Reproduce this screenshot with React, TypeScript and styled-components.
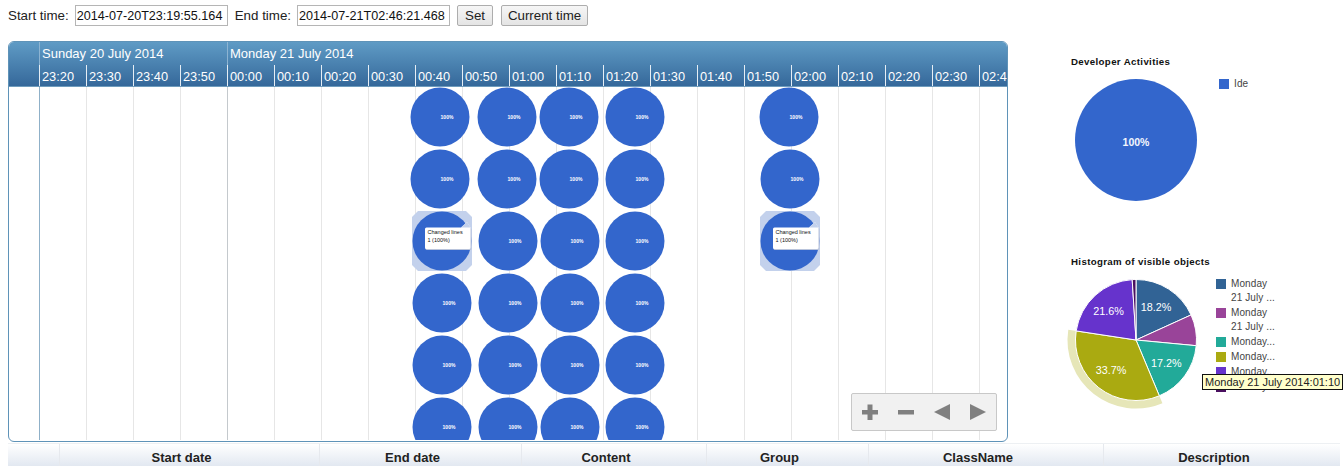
import React from "react";
import styled, { createGlobalStyle } from "styled-components";

const Global = createGlobalStyle`
  html, body { margin: 0; padding: 0; background: #fff; }
  body { font-family: "Liberation Sans", Arial, sans-serif; overflow: hidden; }
`;
const Page = styled.div`
  width: 1343px; height: 466px; overflow: hidden; display: flex; flex-direction: column;
`;
const Toolbar = styled.div`
  height: 41px; flex: none; box-sizing: border-box; padding: 5px 0 0 8px; display: flex; align-items: flex-start;
  font-size: 13.33px; color: #222;
`;
const FieldLabel = styled.label`
  line-height: 21px; margin-right: 6px;
`;
const TimeInput = styled.input`
  box-sizing: border-box; width: 153px; height: 21px; margin: 0 7px 0 0; padding: 0 1px;
  border: 1px solid #b5b5b5; font: 12.6px "Liberation Sans", Arial, sans-serif; color: #111;
`;
const SetButton = styled.button<{ $w: number }>`
  box-sizing: border-box; width: ${p => p.$w}px; height: 21px; margin: 0 8px 0 0; padding: 0;
  border: 1px solid #adadad; border-radius: 2px; background: linear-gradient(#f6f6f6, #e4e4e4);
  font: 13.33px "Liberation Sans", Arial, sans-serif; color: #222;
`;
const Main = styled.div`
  display: flex; flex: none; height: 402px; padding-left: 8px;
`;
const Timeline = styled.div`
  box-sizing: border-box; width: 1000px; height: 401px; border: 1px solid #5f93b8; border-radius: 6px;
  overflow: hidden; display: flex; flex-direction: column; position: relative; padding-bottom: 1px;
`;
const Header = styled.div`
  flex: none; box-sizing: border-box; height: 45px; background: linear-gradient(#5f9bc5, #35689a); color: #fff; font-size: 12.8px;
  border-bottom: 1px solid #6f9cbd; overflow: hidden;
`;
const MajorRow = styled.div`
  height: 23px; padding-left: 30px; display: flex;
`;
const Major = styled.div<{ $w?: number }>`
  box-sizing: border-box; flex: ${p => (p.$w ? `0 0 ${p.$w}px` : "1")}; padding: 3px 0 0 2px; line-height: 17px; font-size: 13px;
  border-left: 1px solid #8db4d2; white-space: nowrap;
`;
const MinorRow = styled.div`
  height: 21px; padding-left: 30px; display: flex;
`;
const Minor = styled.div`
  box-sizing: border-box; flex: 0 0 47px; padding: 2px 0 0 2px; line-height: 19px; border-left: 1px solid #e6eef5;
  white-space: nowrap; overflow: hidden;
`;
const Body = styled.div`
  flex: 1; position: relative; display: flex; padding-left: 30px; overflow: hidden;
`;
const GridCell = styled.div<{ $major?: boolean; $first?: boolean }>`
  box-sizing: border-box; flex: 0 0 47px; border-left: 1px solid ${p => (p.$first ? "#8fb0c8" : p.$major ? "#c4c9cd" : "#e6e6e6")};
`;
const NodeSvg = styled.svg<{ $cx: number; $cy: number }>`
  position: absolute; left: ${p => p.$cx - 9 - 35}px; top: ${p => p.$cy - 87 - 35}px; width: 70px; height: 70px;
`;
const ZoomBar = styled.div`
  position: absolute; left: 842px; top: 306px; box-sizing: border-box; width: 146px; height: 38px;
  display: flex; align-items: center; background: #f1f1f1; border: 1px solid #c8c8c8; border-radius: 2px;
`;
const ZoomIcon = styled.svg`
  flex: 0 0 36px; width: 36px; height: 20px; fill: #808080;
`;
const Side = styled.div`
  margin-left: 61px; width: 274px; flex: none; display: flex; flex-direction: column; padding-top: 13px;
`;
const Chart = styled.section`
  flex: none; height: 200px; position: relative;
`;
const ChartTitle = styled.h3`
  margin: 2px 0 5px 2px; height: 12px; font-size: 9.7px; line-height: 12px; font-weight: bold; color: #111; letter-spacing: 0.35px;
`;
const ChartRow = styled.div`
  display: flex; align-items: flex-start;
`;
const PieSvg = styled.svg`
  flex: none; width: 134px; height: 134px; overflow: visible;
`;
const Legend = styled.ul<{ $ml: number }>`
  list-style: none; margin: 4px 0 0 ${p => p.$ml}px; padding: 0; display: flex; flex-direction: column; gap: 1px;
`;
const LegendItem = styled.li`
  display: flex; gap: 5px; font-size: 10px; line-height: 14px; color: #444; letter-spacing: 0.1px;
`;
const Swatch = styled.span<{ $c: string }>`
  flex: none; width: 10px; height: 10px; margin-top: 2px; background: ${p => p.$c};
`;
const HoverTip = styled.div`
  position: absolute; left: 133px; top: 120px; box-sizing: border-box; height: 16px; padding: 0 2px;
  background: #ffffcc; border: 1px solid #111; font-size: 11px; line-height: 14px; color: #222; white-space: nowrap;
`;
const TableHead = styled.div`
  box-sizing: border-box; margin: 0 3px 0 8px; height: 23px; flex: none; display: grid; grid-template-columns: 51px 260px 202px 185px 162px 235px 237px;
  background: linear-gradient(#ffffff, #e2e8f1); border-top: 1px solid #edf0f3;
`;
const Col = styled.div`
  border-left: 1px solid #e6e9ee; padding-right: 16px; text-align: center; font-size: 13px; font-weight: bold; line-height: 27px; color: #222;
  &:first-child { border-left: 0; }
`;

const ticks = ["23:20","23:30","23:40","23:50","00:00","00:10","00:20","00:30","00:40","00:50","01:00","01:10","01:20","01:30","01:40","01:50","02:00","02:10","02:20","02:30","02:40"];

const nodes: [number, number, boolean?][] = [
  [440,117],[507,117],[569,117],[634.5,117],[789,117],
  [440,179],[507,179],[569,179],[634.5,179],[790,179],
  [442,241,true],[508,241],[570,241],[634.5,241],[790,241,true],
  [442,303],[508,303],[570,303],[635,303],
  [442,365],[508,365],[570,365],[635,365],
  [442,427],[508,427],[570,427],[635,427],
];

function PieNode({ cx, cy, hover }: { cx: number; cy: number; hover?: boolean }) {
  return (
    <NodeSvg $cx={cx} $cy={cy} viewBox="0 0 70 70">
      {hover && <polygon points="11,5 59,5 65,11 65,59 59,65 11,65 5,59 5,11" fill="#c3d1ec" />}
      <circle cx="35" cy="35" r="29.5" fill="#3366cc" />
      {hover ? (
        <>
          <rect x="18.5" y="22" width="46" height="22" rx="1.5" fill="#b9c4dc" />
          <path d="M18 23 a1.500 1.500 0 0 1 1.500 -1.500 H54 L60 16 L63.500 21.500 V41.500 a1.500 1.500 0 0 1 -1.500 1.500 H19.500 a1.500 1.500 0 0 1 -1.500 -1.500 Z" fill="#fff" />
          <polygon points="54,21.500 60,16 63.500,21.500" fill="#c3d1ec" />
          <text x="20.500" y="28" fontSize="5.500" fill="#111" fontFamily="Liberation Sans, Arial, sans-serif">Changed lines</text>
          <text x="20.500" y="36" fontSize="5.500" fill="#111" fontFamily="Liberation Sans, Arial, sans-serif">1 (100%)</text>
        </>
      ) : (
        <text x="42" y="36.800" textAnchor="middle" fontSize="5" fontWeight="bold" fill="#fff" fontFamily="Liberation Sans, Arial, sans-serif">100%</text>
      )}
    </NodeSvg>
  );
}

const slices = [
  { c: "#316395", v: 18.2, label: "18.2%" },
  { c: "#994499", v: 8.3 },
  { c: "#22aa99", v: 17.2, label: "17.2%" },
  { c: "#aaaa11", v: 33.7, label: "33.7%" },
  { c: "#6633cc", v: 21.6, label: "21.6%" },
  { c: "#4a1060", v: 1.0 },
];

const C = 67;
const pt = (pct: number, r: number) => {
  const a = (pct / 100) * 2 * Math.PI;
  return [C + r * Math.sin(a), C - r * Math.cos(a)] as const;
};
const arcPath = (from: number, to: number, r: number) => {
  const [x1, y1] = pt(from, r);
  const [x2, y2] = pt(to, r);
  return `M${C} ${C} L${x1} ${y1} A${r} ${r} 0 ${to - from > 50 ? 1 : 0} 1 ${x2} ${y2} Z`;
};
const ring = (from: number, to: number, r1: number, r2: number) => {
  const [a, b] = pt(from, r2);
  const [c, d] = pt(to, r2);
  const [e, f] = pt(to, r1);
  const [g, h] = pt(from, r1);
  return `M${a} ${b} A${r2} ${r2} 0 ${to - from > 50 ? 1 : 0} 1 ${c} ${d} L${e} ${f} A${r1} ${r1} 0 ${to - from > 50 ? 1 : 0} 0 ${g} ${h} Z`;
};

function Histogram() {
  let cum = 0;
  return (
    <PieSvg viewBox="0 0 134 134">
      <path d={ring(43.7, 77.4, 60, 68.5)} fill="#e6e6b8" />
      {slices.map(s => {
        const from = cum;
        cum += s.v;
        const mid = from + s.v / 2;
        const [lx, ly] = pt(mid, 39);
        return (
          <g key={s.c}>
            <path d={arcPath(from, cum, 60.5)} fill={s.c} stroke="#fff" strokeWidth="1" />
            {s.label && (
              <text x={lx - 1} y={ly + 3.5} textAnchor="middle" fontSize="10.8" fill="#fff" fontFamily="Liberation Sans, Arial, sans-serif">{s.label}</text>
            )}
          </g>
        );
      })}
    </PieSvg>
  );
}

export default function App() {
  return (
    <Page>
      <Global />
      <Toolbar>
        <FieldLabel>Start time:</FieldLabel>
        <TimeInput readOnly value="2014-07-20T23:19:55.164" />
        <FieldLabel>End time:</FieldLabel>
        <TimeInput readOnly value="2014-07-21T02:46:21.468" />
        <SetButton $w={36}>Set</SetButton>
        <SetButton $w={87}>Current time</SetButton>
      </Toolbar>
      <Main>
        <Timeline>
          <Header>
            <MajorRow>
              <Major $w={188}>Sunday 20 July 2014</Major>
              <Major>Monday 21 July 2014</Major>
            </MajorRow>
            <MinorRow>
              {ticks.map(t => <Minor key={t}>{t}</Minor>)}
            </MinorRow>
          </Header>
          <Body>
            {ticks.map((t, i) => <GridCell key={t} $first={i === 0} $major={i === 4} />)}
            {nodes.map(([x, y, h]) => <PieNode key={`${x}-${y}`} cx={x} cy={y} hover={h} />)}
            <ZoomBar>
              <ZoomIcon viewBox="0 0 36 20"><path d="M15.500 2.500h5v5.500h5.500v4.500h-5.500v5.500h-5v-5.500H10V8h5.500z" /></ZoomIcon>
              <ZoomIcon viewBox="0 0 36 20"><rect x="10" y="8" width="16" height="4.500" /></ZoomIcon>
              <ZoomIcon viewBox="0 0 36 20"><polygon points="10,10 26,2 26,18" /></ZoomIcon>
              <ZoomIcon viewBox="0 0 36 20"><polygon points="10,2 26,10 10,18" /></ZoomIcon>
            </ZoomBar>
          </Body>
        </Timeline>
        <Side>
          <Chart>
            <ChartTitle>Developer Activities</ChartTitle>
            <ChartRow>
              <PieSvg viewBox="0 0 134 134">
                <circle cx="67" cy="67" r="61" fill="#3366cc" />
                <text x="67" y="73" textAnchor="middle" fontSize="10.500" fontWeight="bold" fill="#f4f6fc" fontFamily="Liberation Sans, Arial, sans-serif">100%</text>
              </PieSvg>
              <Legend $ml={16}>
                <LegendItem><Swatch $c="#3366cc" />Ide</LegendItem>
              </Legend>
            </ChartRow>
          </Chart>
          <Chart>
            <ChartTitle>Histogram of visible objects</ChartTitle>
            <ChartRow>
              <Histogram />
              <Legend $ml={13}>
                <LegendItem><Swatch $c="#316395" /><span>Monday<br />21 July ...</span></LegendItem>
                <LegendItem><Swatch $c="#994499" /><span>Monday<br />21 July ...</span></LegendItem>
                <LegendItem><Swatch $c="#22aa99" />Monday...</LegendItem>
                <LegendItem><Swatch $c="#aaaa11" />Monday...</LegendItem>
                <LegendItem><Swatch $c="#6633cc" />Monday...</LegendItem>
                <LegendItem><Swatch $c="#4a1060" />Monday...</LegendItem>
              </Legend>
            </ChartRow>
            <HoverTip>Monday 21 July 2014:01:10</HoverTip>
          </Chart>
        </Side>
      </Main>
      <TableHead>
        <Col />
        <Col>Start date</Col>
        <Col>End date</Col>
        <Col>Content</Col>
        <Col>Group</Col>
        <Col>ClassName</Col>
        <Col>Description</Col>
      </TableHead>
    </Page>
  );
}
